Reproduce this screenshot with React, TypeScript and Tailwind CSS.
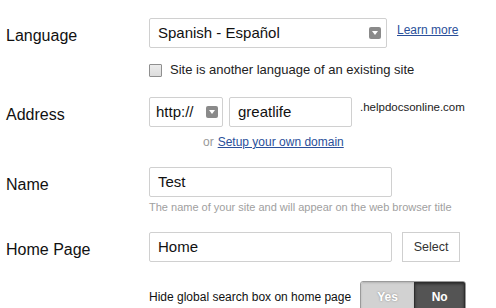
import { ReactNode } from "react"

const font = { fontFamily: '"Liberation Sans", Arial, sans-serif' }

function Arrow() {
  return (
    <span className="flex h-[12px] w-[12px] items-center justify-center rounded-[2px] bg-[#8a8a8a]">
      <svg width="6" height="4" viewBox="0 0 6 4">
        <path d="M0 0h6L3 4z" fill="#fff" />
      </svg>
    </span>
  )
}

function Row({ label, children, className = "" }: { label?: string; children: ReactNode; className?: string }) {
  return (
    <div className={"flex items-center " + className}>
      <div className="w-[143px] shrink-0 pt-[6px] text-[16px] text-[#111]">{label}</div>
      {children}
    </div>
  )
}

export default function App() {
  return (
    <div className="h-[308px] w-[496px] overflow-hidden bg-white pl-[6px] pt-[18px]" style={font}>
      <Row label="Language">
        <div className="flex h-[30px] w-[238px] items-center justify-between rounded-[2px] border border-[#d0d0d0] pl-[8px] pr-[5px] text-[15px] text-[#111]">
          <span>Spanish - Español</span>
          <Arrow />
        </div>
        <a className="ml-[10px] -mt-[6px] text-[12px] text-[#2a4f9a] underline">Learn more</a>
      </Row>

      <Row className="mt-[14px] h-[16px]">
        <span className="h-[13px] w-[13px] rounded-[1px] border border-[#8f8f8f] bg-gradient-to-b from-[#ececec] to-[#dcdcdc]" />
        <span className="ml-[8px] text-[13px] text-[#222]">Site is another language of an existing site</span>
      </Row>

      <Row label="Address" className="mt-[19px]">
        <div className="flex h-[30px] w-[74px] items-center justify-between rounded-[2px] border border-[#d0d0d0] pl-[6px] pr-[4px] text-[15px] text-[#111]">
          <span>http://</span>
          <Arrow />
        </div>
        <div className="ml-[6px] flex h-[30px] w-[123px] items-center rounded-[2px] border border-[#d0d0d0] pl-[8px] text-[15px] text-[#111]">
          greatlife
        </div>
        <span className="ml-[8px] -mt-[8px] text-[11.5px] text-[#222]">.helpdocsonline.com</span>
      </Row>

      <div className="mt-[7px] flex h-[16px] items-center pl-[197px] text-[12px]">
        <span className="text-[#999]">or</span>
        <a className="ml-[4px] text-[#2a4f9a] underline">Setup your own domain</a>
      </div>

      <Row label="Name" className="mt-[17px]">
        <div className="flex h-[30px] w-[243px] items-center rounded-[2px] border border-[#d0d0d0] pl-[8px] text-[15px] text-[#111]">
          Test
        </div>
      </Row>
      <div className="mt-[3px] flex h-[14px] items-center pl-[143px] text-[11px] text-[#a0a0a0]">
        The name of your site and will appear on the web browser title
      </div>

      <Row label="Home Page" className="mt-[18px]">
        <div className="flex h-[30px] w-[243px] items-center rounded-[2px] border border-[#d0d0d0] pl-[8px] text-[15px] text-[#111]">
          Home
        </div>
        <button className="ml-[10px] flex h-[30px] w-[58px] items-center justify-center border border-[#cfcfcf] bg-white text-[12.5px] text-[#333]">
          Select
        </button>
      </Row>

      <Row className="mt-[19px]">
        <span className="text-[12px] text-[#111]">Hide global search box on home page</span>
        <div className="ml-[9px] flex h-[32px] w-[106px] overflow-hidden rounded-[3px] border border-[#9a9a9a] text-[12px] font-bold text-white">
          <span className="flex w-[53px] items-center justify-center bg-[#d2d2d2] shadow-[inset_0_1px_2px_rgba(0,0,0,0.15)] [text-shadow:0_0_2px_#888]">
            Yes
          </span>
          <span className="flex flex-1 items-center justify-center border border-[#2e2e2e] bg-[#545454] shadow-[inset_0_1px_3px_rgba(0,0,0,0.5)]">
            No
          </span>
        </div>
      </Row>
    </div>
  )
}
